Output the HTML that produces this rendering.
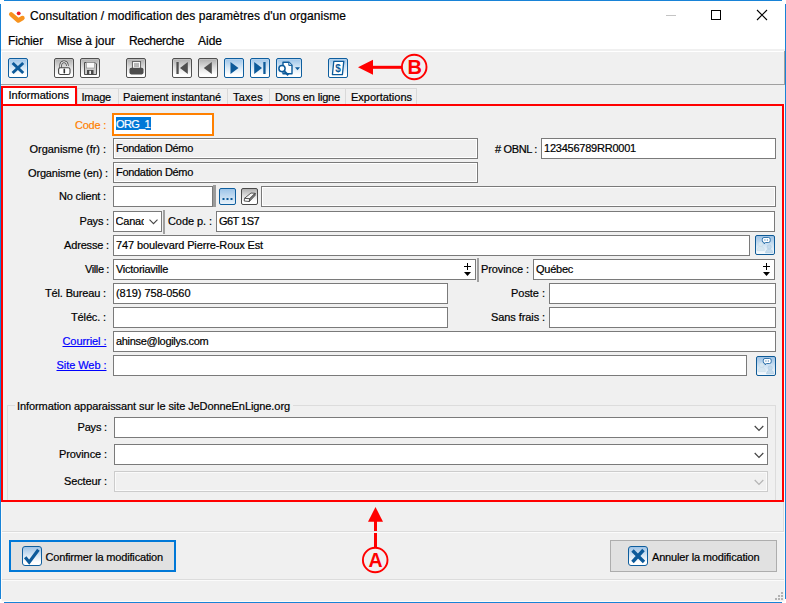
<!DOCTYPE html>
<html><head><meta charset="utf-8"><title>Consultation / modification des paramètres d'un organisme</title>
<style>
html,body{margin:0;padding:0;}
body{width:786px;height:603px;position:relative;overflow:hidden;background:#fff;font-family:'Liberation Sans',sans-serif;}
.t{position:absolute;white-space:nowrap;line-height:14px;font-family:'Liberation Sans',sans-serif;-webkit-text-stroke:0.2px currentColor;}
.f{position:absolute;box-sizing:border-box;border:1px solid #7a7a7a;background:#fff;height:21px;}
.fd{background:#f0f0f0;border-color:#7a7a7a;box-shadow:inset 0 0 0 1px #fff;}
svg{position:absolute;overflow:visible;}
</style></head>
<body>
<div style="position:absolute;left:0px;top:0px;width:786px;height:603px;box-sizing:border-box;background:#fff;"></div>
<div style="position:absolute;left:4px;top:0px;width:778px;height:1px;box-sizing:border-box;background:#1883d7;"></div>
<div style="position:absolute;left:0px;top:4px;width:1px;height:595px;box-sizing:border-box;background:#1883d7;"></div>
<div style="position:absolute;left:785px;top:4px;width:1px;height:595px;box-sizing:border-box;background:#1883d7;"></div>
<div style="position:absolute;left:4px;top:602px;width:778px;height:1px;box-sizing:border-box;background:#1883d7;"></div>
<svg style="left:8px;top:8px" width="18" height="16" viewBox="8 8 18 16"><path d="M11.200 14.300L18.300 20.500L22.500 18" fill="none" stroke="#f7931e" stroke-width="4.400" stroke-linecap="round" stroke-linejoin="round"/><circle cx="18.7" cy="13.3" r="1.9" fill="#ed1c24"/></svg>
<span class="t " style="letter-spacing:0.062px;left:30px;top:9px;font-size:12px;color:#000;">Consultation / modification des paramètres d'un organisme</span>
<svg style="left:540px;top:5px" width="240" height="20" viewBox="540 5 240 20"><path d="M666 15.500h10" stroke="#c4c4c4" stroke-width="1"/><rect x="711.5" y="10.5" width="9" height="9" fill="none" stroke="#000" stroke-width="1"/><path d="M757 10l10 10M767 10l-10 10" stroke="#000" stroke-width="1.1"/></svg>
<span class="t " style="letter-spacing:-0.145px;left:8px;top:34px;font-size:12px;color:#000;">Fichier</span>
<span class="t " style="letter-spacing:-0.062px;left:57px;top:34px;font-size:12px;color:#000;">Mise à jour</span>
<span class="t " style="letter-spacing:-0.337px;left:129px;top:34px;font-size:12px;color:#000;">Recherche</span>
<span class="t " style="letter-spacing:-0.008px;left:198px;top:34px;font-size:12px;color:#000;">Aide</span>
<div style="position:absolute;left:1px;top:49px;width:784px;height:36px;box-sizing:border-box;background:#f0f0f0;"></div>
<div style="position:absolute;left:2px;top:51px;width:782px;height:1px;box-sizing:border-box;background:#fff;"></div>
<div style="position:absolute;left:1px;top:51px;width:1px;height:34px;box-sizing:border-box;background:#fff;"></div>
<div style="position:absolute;left:1px;top:84px;width:784px;height:1px;box-sizing:border-box;background:#a0a0a0;"></div>
<div style="position:absolute;left:784px;top:51px;width:1px;height:34px;box-sizing:border-box;background:#a0a0a0;"></div>
<div style="position:absolute;left:1px;top:85px;width:784px;height:517px;box-sizing:border-box;background:#f0f0f0;"></div>
<div style="position:absolute;left:8px;top:58px;width:20px;height:20px;box-sizing:border-box;border:1px solid #0e5e9e;border-radius:2px;background:linear-gradient(#9cc4e8,#d9e9f6 50%,#ffffff 88%);box-shadow:inset 0 0 0 1px rgba(255,255,255,0.2);"><svg style="left:0;top:0" width="18" height="18" viewBox="0 0 18 18"><path d="M3.600 4l10.600 10M14.200 4l-10.600 10" stroke="#0c5a9a" stroke-width="3" fill="none"/></svg></div>
<div style="position:absolute;left:54px;top:58px;width:20px;height:20px;box-sizing:border-box;border:1px solid #505050;border-radius:2px;background:linear-gradient(#aeaeae,#e2e2e2 50%,#ffffff 88%);box-shadow:inset 0 0 0 1px rgba(255,255,255,0.2);"><svg style="left:0;top:0" width="18" height="18" viewBox="0 0 18 18"><path d="M5.700 9V6a3.300 3.300 0 0 1 6.600 0v1" fill="none" stroke="#444" stroke-width="2.600"/><path d="M5.700 9.500V6a3.300 3.300 0 0 1 6.600 0v1" fill="none" stroke="#fff" stroke-width="1"/><rect x="3.600" y="8.700" width="11.400" height="6.800" rx="1.800" fill="#fff" stroke="#444" stroke-width="1.100"/><path d="M9.300 10.400v3.400" stroke="#333" stroke-width="1.600" stroke-linecap="round"/></svg></div>
<div style="position:absolute;left:80px;top:58px;width:20px;height:20px;box-sizing:border-box;border:1px solid #505050;border-radius:2px;background:linear-gradient(#aeaeae,#e2e2e2 50%,#ffffff 88%);box-shadow:inset 0 0 0 1px rgba(255,255,255,0.2);"><svg style="left:0;top:0" width="18" height="18" viewBox="0 0 18 18"><path d="M3.500 3.500h10.500l1.500 1.500v10.500h-12z" fill="#c9c9c9" stroke="#505050" stroke-width="1"/><rect x="5.500" y="3.500" width="8" height="5.500" fill="#fafafa" stroke="#8a8a8a" stroke-width="0.600"/><rect x="6" y="11" width="6.500" height="4.500" fill="#4a4a4a"/><rect x="8.300" y="11.800" width="1.700" height="3.200" fill="#f0f0f0"/></svg></div>
<div style="position:absolute;left:126px;top:58px;width:20px;height:20px;box-sizing:border-box;border:1px solid #505050;border-radius:2px;background:linear-gradient(#aeaeae,#e2e2e2 50%,#ffffff 88%);box-shadow:inset 0 0 0 1px rgba(255,255,255,0.2);"><svg style="left:0;top:0" width="18" height="18" viewBox="0 0 18 18"><rect x="5.400" y="2.600" width="8.200" height="7" fill="#fafafa" stroke="#555" stroke-width="0.900"/><path d="M7 5h5M7 7h5" stroke="#777" stroke-width="1"/><rect x="2.500" y="8.700" width="14" height="6.700" rx="1.800" fill="#4d4d4d"/></svg></div>
<div style="position:absolute;left:172px;top:58px;width:20px;height:20px;box-sizing:border-box;border:1px solid #505050;border-radius:2px;background:linear-gradient(#aeaeae,#e2e2e2 50%,#ffffff 88%);box-shadow:inset 0 0 0 1px rgba(255,255,255,0.2);"><svg style="left:0;top:0" width="18" height="18" viewBox="0 0 18 18"><rect x="3.400" y="3" width="2.300" height="12" fill="#505050"/><path d="M14.800 3v12L7 9z" fill="#505050"/></svg></div>
<div style="position:absolute;left:198px;top:58px;width:20px;height:20px;box-sizing:border-box;border:1px solid #505050;border-radius:2px;background:linear-gradient(#aeaeae,#e2e2e2 50%,#ffffff 88%);box-shadow:inset 0 0 0 1px rgba(255,255,255,0.2);"><svg style="left:0;top:0" width="18" height="18" viewBox="0 0 18 18"><path d="M12.800 3v12L4.800 9z" fill="#505050"/></svg></div>
<div style="position:absolute;left:224px;top:58px;width:20px;height:20px;box-sizing:border-box;border:1px solid #0e5e9e;border-radius:2px;background:linear-gradient(#9cc4e8,#d9e9f6 50%,#ffffff 88%);box-shadow:inset 0 0 0 1px rgba(255,255,255,0.2);"><svg style="left:0;top:0" width="18" height="18" viewBox="0 0 18 18"><path d="M5.500 3v12L13.500 9z" fill="#0c5a9a"/></svg></div>
<div style="position:absolute;left:250px;top:58px;width:20px;height:20px;box-sizing:border-box;border:1px solid #0e5e9e;border-radius:2px;background:linear-gradient(#9cc4e8,#d9e9f6 50%,#ffffff 88%);box-shadow:inset 0 0 0 1px rgba(255,255,255,0.2);"><svg style="left:0;top:0" width="18" height="18" viewBox="0 0 18 18"><rect x="12.300" y="3" width="2.300" height="12" fill="#0c5a9a"/><path d="M3.200 3v12L11 9z" fill="#0c5a9a"/></svg></div>
<div style="position:absolute;left:276px;top:58px;width:26px;height:20px;box-sizing:border-box;border:1px solid #0e5e9e;border-radius:2px;background:linear-gradient(#9cc4e8,#d9e9f6 50%,#ffffff 88%);box-shadow:inset 0 0 0 1px rgba(255,255,255,0.2);"><svg style="left:0;top:0" width="24" height="18" viewBox="0 0 24 18"><path d="M6 3.200h6l3 3v8.500h-9z" fill="#fff" stroke="#0c5a9a" stroke-width="1.400" stroke-linejoin="round"/><path d="M11.800 3.200v3.200h3.200" fill="#cfe0ef" stroke="#0c5a9a" stroke-width="1"/><circle cx="5" cy="9.600" r="3.100" fill="#fff" stroke="#0c5a9a" stroke-width="1.500"/><path d="M7.300 12.200l4 4" stroke="#0c5a9a" stroke-width="2"/><path d="M18 8.300h5l-2.500 2.900z" fill="#0c5a9a"/></svg></div>
<div style="position:absolute;left:328px;top:58px;width:20px;height:20px;box-sizing:border-box;border:1px solid #0e5e9e;border-radius:2px;background:linear-gradient(#9cc4e8,#d9e9f6 50%,#ffffff 88%);box-shadow:inset 0 0 0 1px rgba(255,255,255,0.2);"><svg style="left:0;top:0" width="18" height="18" viewBox="0 0 18 18"><path d="M4.800 2.300h10l-1.400 13.300h-10z" fill="#fff" stroke="#0c5a9a" stroke-width="1.300" stroke-linejoin="round"/><text x="9.100" y="12.600" font-size="10" font-weight="bold" text-anchor="middle" fill="#0c5a9a" font-family="Liberation Sans, sans-serif">$</text></svg></div>
<svg style="left:350px;top:50px" width="90" height="34" viewBox="350 50 90 34"><path d="M358 67.300L373 59.800v15z" fill="#ff0000"/><rect x="370" y="65.800" width="32" height="3" fill="#ff0000"/><circle cx="414.200" cy="67" r="12.300" fill="none" stroke="#ff0000" stroke-width="1.900"/><text x="414.700" y="73.800" font-size="20" font-weight="bold" text-anchor="middle" fill="#ff0000" font-family="Liberation Sans, sans-serif">B</text></svg>
<div style="position:absolute;left:1px;top:85px;width:784px;height:20px;box-sizing:border-box;background:#f0f0f0;"></div>
<div style="position:absolute;left:77px;top:88px;width:42px;height:17px;box-sizing:border-box;border:1px solid #d9d9d9;border-bottom:none;background:#f0f0f0;"></div>
<span class="t " style="letter-spacing:-0.216px;left:81.5px;top:90px;font-size:11px;color:#000;">Image</span>
<div style="position:absolute;left:118px;top:88px;width:110px;height:17px;box-sizing:border-box;border:1px solid #d9d9d9;border-bottom:none;background:#f0f0f0;"></div>
<span class="t " style="letter-spacing:-0.121px;left:123px;top:90px;font-size:11px;color:#000;">Paiement instantané</span>
<div style="position:absolute;left:227px;top:88px;width:43px;height:17px;box-sizing:border-box;border:1px solid #d9d9d9;border-bottom:none;background:#f0f0f0;"></div>
<span class="t " style="letter-spacing:0.25px;left:233px;top:90px;font-size:11px;color:#000;">Taxes</span>
<div style="position:absolute;left:269px;top:88px;width:77px;height:17px;box-sizing:border-box;border:1px solid #d9d9d9;border-bottom:none;background:#f0f0f0;"></div>
<span class="t " style="letter-spacing:-0.175px;left:275px;top:90px;font-size:11px;color:#000;">Dons en ligne</span>
<div style="position:absolute;left:345px;top:88px;width:72px;height:17px;box-sizing:border-box;border:1px solid #d9d9d9;border-bottom:none;background:#f0f0f0;"></div>
<span class="t " style="letter-spacing:-0.013px;left:351px;top:90px;font-size:11px;color:#000;">Exportations</span>
<div style="position:absolute;left:3px;top:86px;width:74px;height:20px;box-sizing:border-box;background:#fff;"></div>
<span class="t " style="letter-spacing:-0.003px;left:8.5px;top:88px;font-size:11px;color:#000;">Informations</span>
<div style="position:absolute;left:1px;top:104px;width:784px;height:1px;box-sizing:border-box;background:#d9d9d9;"></div>
<span class="t " style="letter-spacing:-0.237px;right:680px;top:118px;font-size:11px;color:#ff8000;">Code :</span>
<div style="position:absolute;left:112px;top:113px;width:102px;height:23px;box-sizing:border-box;border:2px solid #ff8000;background:#fff;box-shadow:0 0 0 1px #e9f0f6;"></div>
<div style="position:absolute;left:116px;top:117px;width:35px;height:13px;box-sizing:border-box;background:#0078d7;"></div>
<span class="t " style="letter-spacing:-0.659px;left:116px;top:117px;font-size:11px;color:#fff;">ORG_1</span>
<span class="t " style="letter-spacing:-0.032px;right:680px;top:142px;font-size:11px;color:#000;">Organisme (fr) :</span>
<div class="f fd" style="left:113px;top:138px;width:365px;height:21px"></div>
<span class="t " style="letter-spacing:-0.309px;left:116px;top:141px;font-size:11px;color:#000;">Fondation Démo</span>
<span class="t " style="letter-spacing:-0.355px;left:495px;top:142px;font-size:11px;color:#000;"># OBNL :</span>
<div class="f" style="left:541px;top:138px;width:235px;height:21px"></div>
<span class="t " style="letter-spacing:-0.228px;left:544px;top:141px;font-size:11px;color:#000;">123456789RR0001</span>
<span class="t " style="letter-spacing:-0.158px;right:678px;top:166px;font-size:11px;color:#000;">Organisme (en) :</span>
<div class="f fd" style="left:113px;top:162px;width:365px;height:21px"></div>
<span class="t " style="letter-spacing:-0.309px;left:116px;top:165px;font-size:11px;color:#000;">Fondation Démo</span>
<span class="t " style="letter-spacing:-0.175px;right:680px;top:189px;font-size:11px;color:#000;">No client :</span>
<div class="f" style="left:113px;top:186px;width:100px;height:21px"></div>
<div style="position:absolute;left:213px;top:185px;width:3px;height:22px;box-sizing:border-box;background:#9a9a9a;"></div>
<div style="position:absolute;left:219px;top:188px;width:17px;height:17px;box-sizing:border-box;border:1px solid #0e5e9e;border-radius:2px;background:linear-gradient(#9cc4e8,#e8f2fa);"><svg style="left:0;top:0" width="15" height="15" viewBox="0 0 15 15"><rect x="2.500" y="9" width="2" height="2" fill="#0c5a9a"/><rect x="6.500" y="9" width="2" height="2" fill="#0c5a9a"/><rect x="10.500" y="9" width="2" height="2" fill="#0c5a9a"/></svg></div>
<div style="position:absolute;left:241px;top:188px;width:17px;height:17px;box-sizing:border-box;border:1px solid #4a4a4a;border-radius:2px;background:linear-gradient(#b0b0b0,#e4e4e4 50%,#ffffff 80%);"><svg style="left:0;top:0" width="15" height="15" viewBox="0 0 15 15"><path d="M2.500 9.300L9 4l4.200 0.300L7.700 9.800z" fill="#f4f4f4" stroke="#444" stroke-width="0.900" stroke-linejoin="round"/><path d="M2.500 9.300L2.200 12l5.100 0.500L7.700 9.800z" fill="#fff" stroke="#444" stroke-width="0.900" stroke-linejoin="round"/><path d="M7.700 9.800L13.200 4.300L13 6.500L7.300 12.500z" fill="#888" stroke="#444" stroke-width="0.900" stroke-linejoin="round"/></svg></div>
<div class="f fd" style="left:261px;top:186px;width:515px;height:21px;box-shadow:inset 0 0 0 1px #fff"></div>
<span class="t " style="letter-spacing:-0.18px;right:677px;top:214px;font-size:11px;color:#000;">Pays :</span>
<div class="f" style="left:113px;top:211px;width:49px;height:21px"></div>
<div style="position:absolute;left:115.500px;top:214px;width:28.500px;height:15px;overflow:hidden"><span class="t" style="left:0;top:0;font-size:11px;letter-spacing:-0.2px">Canada</span></div>
<svg style="left:149px;top:219px" width="9" height="6" viewBox="0 0 9 6"><path d="M0.500 0.700l4 4 4-4" fill="none" stroke="#444" stroke-width="1.100"/></svg>
<div style="position:absolute;left:163px;top:210px;width:2px;height:24px;box-sizing:border-box;background:#a0a0a0;"></div>
<span class="t " style="letter-spacing:-0.071px;left:168px;top:214px;font-size:11px;color:#000;">Code p. :</span>
<div class="f" style="left:216px;top:211px;width:559px;height:21px"></div>
<span class="t " style="letter-spacing:-0.547px;left:219px;top:214px;font-size:11px;color:#000;">G6T 1S7</span>
<span class="t " style="letter-spacing:-0.163px;right:677px;top:238px;font-size:11px;color:#000;">Adresse :</span>
<div class="f" style="left:113px;top:235px;width:637px;height:21px"></div>
<span class="t " style="letter-spacing:-0.118px;left:116px;top:238px;font-size:11px;color:#000;">747 boulevard Pierre-Roux Est</span>
<span class="t " style="letter-spacing:-0.386px;right:677px;top:262px;font-size:11px;color:#000;">Ville :</span>
<div class="f" style="left:113px;top:259px;width:363px;height:21px"></div>
<span class="t " style="letter-spacing:-0.264px;left:116px;top:262px;font-size:11px;color:#000;">Victoriaville</span>
<div style="position:absolute;left:477px;top:258px;width:2px;height:24px;box-sizing:border-box;background:#a0a0a0;"></div>
<span class="t " style="letter-spacing:-0.092px;left:481px;top:262px;font-size:11px;color:#000;">Province :</span>
<div class="f" style="left:533px;top:259px;width:242px;height:21px"></div>
<span class="t " style="letter-spacing:-0.255px;left:536px;top:262px;font-size:11px;color:#000;">Québec</span>
<span class="t " style="letter-spacing:-0.153px;right:680px;top:286px;font-size:11px;color:#000;">Tél. Bureau :</span>
<div class="f" style="left:113px;top:283px;width:335px;height:21px"></div>
<span class="t " style="letter-spacing:-0.052px;left:116px;top:286px;font-size:11px;color:#000;">(819) 758-0560</span>
<span class="t " style="letter-spacing:-0.036px;right:241px;top:286px;font-size:11px;color:#000;">Poste :</span>
<div class="f" style="left:549px;top:283px;width:227px;height:21px"></div>
<span class="t " style="letter-spacing:-0.135px;right:680px;top:310px;font-size:11px;color:#000;">Téléc. :</span>
<div class="f" style="left:113px;top:307px;width:335px;height:21px"></div>
<span class="t " style="letter-spacing:-0.086px;right:241px;top:310px;font-size:11px;color:#000;">Sans frais :</span>
<div class="f" style="left:549px;top:307px;width:227px;height:21px"></div>
<span class="t " style="letter-spacing:-0.062px;right:679.5px;top:334px;font-size:11px;color:#0000ff;text-decoration:underline;">Courriel :</span>
<div class="f" style="left:113px;top:331px;width:663px;height:21px"></div>
<span class="t " style="letter-spacing:-0.306px;left:116px;top:334px;font-size:11px;color:#000;">ahinse@logilys.com</span>
<span class="t " style="letter-spacing:-0.055px;right:679.5px;top:358px;font-size:11px;color:#0000ff;text-decoration:underline;">Site Web :</span>
<div class="f" style="left:113px;top:355px;width:634px;height:21px"></div>
<svg style="left:464px;top:263px" width="9" height="15" viewBox="0 0 9 15"><path d="M0 3.500h7M3.500 0v7" stroke="#000" stroke-width="1"/><path d="M0 9h7l-3.500 4z" fill="#000"/></svg>
<svg style="left:763px;top:263px" width="9" height="15" viewBox="0 0 9 15"><path d="M0 3.500h7M3.500 0v7" stroke="#000" stroke-width="1"/><path d="M0 9h7l-3.500 4z" fill="#000"/></svg>
<div style="position:absolute;left:755px;top:235px;width:20px;height:20px;box-sizing:border-box;border:1px solid #0e5a96;border-radius:2px;background:linear-gradient(#9cc1e4,#d5e6f4 55%,#f6fafd);"><svg style="left:0;top:0" width="18" height="18" viewBox="0 0 18 18"><g fill="#d6e7f1" stroke="#c2d9e6" stroke-width="0.500"><circle cx="4.7" cy="8.2" r="2.4"/><path d="M1 14.5c0-3 1.700-4 3.700-4s3.700 1 3.700 4z"/></g><g fill="#c3daec" stroke="#a9c8e0" stroke-width="0.500"><circle cx="13.200" cy="11" r="2.200"/><path d="M9.500 17c0-2.800 1.700-3.800 3.700-3.800s3.700 1 3.700 3.800z"/></g><path d="M8 1.500h4.500a1.700 1.700 0 0 1 1.700 1.700v1.600a1.700 1.700 0 0 1 -1.700 1.700h-3l-1.300 1.400v-1.400h-0.200a1.700 1.700 0 0 1 -1.700 -1.700v-1.600a1.700 1.700 0 0 1 1.700 -1.700z" fill="#fff" stroke="#0c5a9a" stroke-width="0.800"/><path d="M8.300 4h1.200M10.800 4h1.200" stroke="#0c5a9a" stroke-width="0.800"/></svg></div>
<div style="position:absolute;left:756px;top:356px;width:20px;height:20px;box-sizing:border-box;border:1px solid #0e5a96;border-radius:2px;background:linear-gradient(#9cc1e4,#d5e6f4 55%,#f6fafd);"><svg style="left:0;top:0" width="18" height="18" viewBox="0 0 18 18"><g fill="#d6e7f1" stroke="#c2d9e6" stroke-width="0.500"><circle cx="4.7" cy="8.2" r="2.4"/><path d="M1 14.5c0-3 1.700-4 3.700-4s3.700 1 3.700 4z"/></g><g fill="#c3daec" stroke="#a9c8e0" stroke-width="0.500"><circle cx="13.200" cy="11" r="2.200"/><path d="M9.500 17c0-2.800 1.700-3.800 3.700-3.800s3.700 1 3.700 3.800z"/></g><path d="M8 1.500h4.500a1.700 1.700 0 0 1 1.700 1.700v1.600a1.700 1.700 0 0 1 -1.700 1.700h-3l-1.300 1.400v-1.400h-0.200a1.700 1.700 0 0 1 -1.700 -1.700v-1.600a1.700 1.700 0 0 1 1.700 -1.700z" fill="#fff" stroke="#0c5a9a" stroke-width="0.800"/><path d="M8.300 4h1.200M10.800 4h1.200" stroke="#0c5a9a" stroke-width="0.800"/></svg></div>
<div style="position:absolute;left:7px;top:405px;width:769px;height:96px;box-sizing:border-box;border:1px solid #dcdcdc;"></div>
<div style="position:absolute;left:15px;top:399px;width:278px;height:14px;box-sizing:border-box;background:#f0f0f0;"></div>
<span class="t " style="letter-spacing:-0.084px;left:17px;top:399px;font-size:11px;color:#000;">Information apparaissant sur le site JeDonneEnLigne.org</span>
<span class="t " style="letter-spacing:-0.18px;right:679px;top:420px;font-size:11px;color:#000;">Pays :</span>
<div class="f" style="left:114px;top:417px;width:654px;height:21px"></div>
<svg style="left:754px;top:425px" width="10" height="7" viewBox="0 0 10 7"><path d="M0.7 1l4.3 4.3L9.300 1" fill="none" stroke="#444" stroke-width="1.200"/></svg>
<span class="t " style="letter-spacing:-0.092px;right:679px;top:447px;font-size:11px;color:#000;">Province :</span>
<div class="f" style="left:114px;top:444px;width:654px;height:21px"></div>
<svg style="left:754px;top:452px" width="10" height="7" viewBox="0 0 10 7"><path d="M0.7 1l4.3 4.3L9.300 1" fill="none" stroke="#444" stroke-width="1.200"/></svg>
<span class="t " style="letter-spacing:-0.115px;right:679px;top:474px;font-size:11px;color:#000;">Secteur :</span>
<div class="f" style="left:114px;top:471px;width:654px;height:21px;border-color:#cccccc;background:#f0f0f0;box-shadow:inset 0 0 0 1px #fafafa"></div>
<svg style="left:754px;top:479px" width="10" height="7" viewBox="0 0 10 7"><path d="M0.7 1l4.3 4.3L9.300 1" fill="none" stroke="#b4b4b4" stroke-width="1.200"/></svg>
<svg style="left:355px;top:505px" width="40" height="70" viewBox="355 505 40 70"><path d="M375.500 507l-7.500 14.700h15z" fill="#ff0000"/><rect x="374" y="520" width="3" height="28" fill="#ff0000"/><circle cx="375.200" cy="560" r="12.300" fill="none" stroke="#ff0000" stroke-width="1.900"/><text x="375.500" y="566.700" font-size="19.500" font-weight="bold" text-anchor="middle" fill="#ff0000" font-family="Liberation Sans, sans-serif">A</text></svg>
<div style="position:absolute;left:783px;top:502px;width:1px;height:29px;box-sizing:border-box;background:#dcdcdc;"></div>
<div style="position:absolute;left:784px;top:104px;width:1px;height:427px;box-sizing:border-box;background:#fbfbfb;"></div>
<div style="position:absolute;left:1px;top:531px;width:784px;height:1px;box-sizing:border-box;background:#dcdcdc;"></div>
<div style="position:absolute;left:1px;top:532px;width:784px;height:1px;box-sizing:border-box;background:#fbfbfb;"></div>
<div style="position:absolute;left:1px;top:579px;width:784px;height:1px;box-sizing:border-box;background:#dcdcdc;"></div>
<div style="position:absolute;left:1px;top:580px;width:784px;height:1px;box-sizing:border-box;background:#fbfbfb;"></div>
<div style="position:absolute;left:9px;top:540px;width:167px;height:32px;box-sizing:border-box;border:2px solid #0078d7;background:#e1e1e1;"></div>
<div style="position:absolute;left:22px;top:546px;width:20px;height:20px;box-sizing:border-box;border:1px solid #0e5e9e;border-radius:3px;background:linear-gradient(#9fc3e6,#dbe9f5 50%,#ffffff 85%);"><svg style="left:0;top:0" width="18" height="18" viewBox="0 0 18 18"><path d="M2.200 10.200l4 5 9.200-12.400" fill="none" stroke="#0c5a9a" stroke-width="3.200"/></svg></div>
<span class="t " style="letter-spacing:-0.166px;left:45.5px;top:550px;font-size:11px;color:#000;">Confirmer la modification</span>
<div style="position:absolute;left:610px;top:540px;width:167px;height:32px;box-sizing:border-box;border:1px solid #adadad;background:#e1e1e1;"></div>
<div style="position:absolute;left:628px;top:546px;width:20px;height:20px;box-sizing:border-box;border:1px solid #0e5e9e;border-radius:3px;background:linear-gradient(#9fc3e6,#dbe9f5 50%,#ffffff 85%);"><svg style="left:0;top:0" width="18" height="18" viewBox="0 0 18 18"><path d="M3.500 3.500l11.500 11.500M14.500 3l-11 12" fill="none" stroke="#0c5a9a" stroke-width="3.400"/></svg></div>
<span class="t " style="letter-spacing:-0.165px;left:652px;top:550px;font-size:11px;color:#000;">Annuler la modification</span>
<div style="position:absolute;left:1px;top:502px;width:1px;height:100px;box-sizing:border-box;background:#fdfaf7;"></div>
<div style="position:absolute;left:784px;top:531px;width:1px;height:71px;box-sizing:border-box;background:#fdfaf7;"></div>
<div style="position:absolute;left:1px;top:601px;width:784px;height:1px;box-sizing:border-box;background:#fdfaf7;"></div>
<svg style="left:774px;top:591px" width="10" height="10" viewBox="774 591 10 10"><g fill="#b2b2b2"><rect x="781" y="592" width="2" height="2"/><rect x="778" y="595" width="2" height="2"/><rect x="781" y="595" width="2" height="2"/><rect x="775" y="598" width="2" height="2"/><rect x="778" y="598" width="2" height="2"/><rect x="781" y="598" width="2" height="2"/></g></svg>
<div style="position:absolute;left:1px;top:104px;width:783px;height:398px;box-sizing:border-box;border:2px solid #ff0000;background:none;"></div>
<div style="position:absolute;left:1px;top:86px;width:76px;height:20px;box-sizing:border-box;border:2px solid #ff0000;"></div>
</body></html>
